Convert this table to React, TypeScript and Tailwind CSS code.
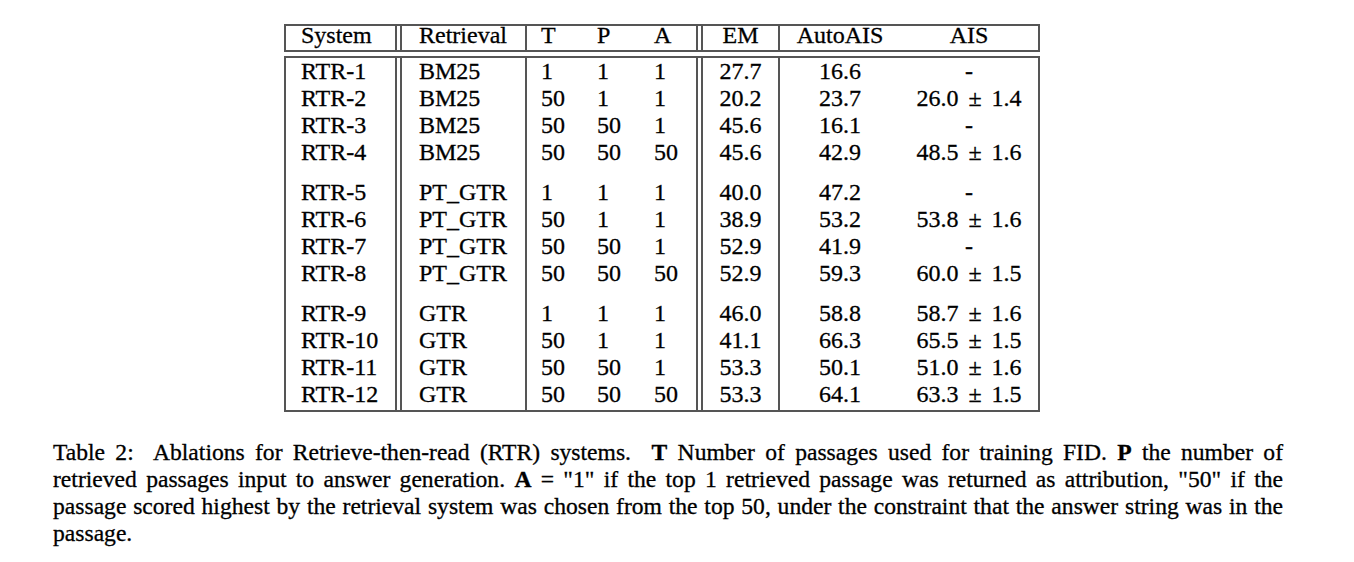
type Cell = string | JSX.Element;

const LINE = "border-[#555]";

function PlusMinus({ value, err }: { value: string; err: string }) {
  return (
    <span className="whitespace-nowrap">
      {value}
      <span className="mx-[10px]">±</span>
      {err}
    </span>
  );
}

function Row({ cells, className = "" }: { cells: Cell[]; className?: string }) {
  const [sys, ret, t, p, a, em, auto, ais] = cells;
  return (
    <div className={`flex ${className}`}>
      <div className={`w-[111px] border-r-2 ${LINE} pl-[15px]`}>{sys}</div>
      <div className={`w-[5px] border-r-2 ${LINE}`} />
      <div className={`w-[125px] border-r-2 ${LINE} pl-[17px]`}>{ret}</div>
      <div className={`flex w-[171px] border-r-2 ${LINE} pl-[14px]`}>
        <span className="w-[56px]">{t}</span>
        <span className="w-[57px]">{p}</span>
        <span>{a}</span>
      </div>
      <div className={`w-[5px] border-r-2 ${LINE}`} />
      <div className={`w-[77px] border-r-2 ${LINE} text-center`}>{em}</div>
      <div className="w-[120px] text-center">{auto}</div>
      <div className="flex-1 text-center">{ais}</div>
    </div>
  );
}

const EMPTY: Cell[] = ["", "", "", "", "", "", "", ""];

const groups: Cell[][][] = [
  [
    ["RTR-1", "BM25", "1", "1", "1", "27.7", "16.6", "-"],
    ["RTR-2", "BM25", "50", "1", "1", "20.2", "23.7", <PlusMinus value="26.0" err="1.4" />],
    ["RTR-3", "BM25", "50", "50", "1", "45.6", "16.1", "-"],
    ["RTR-4", "BM25", "50", "50", "50", "45.6", "42.9", <PlusMinus value="48.5" err="1.6" />],
  ],
  [
    ["RTR-5", "PT_GTR", "1", "1", "1", "40.0", "47.2", "-"],
    ["RTR-6", "PT_GTR", "50", "1", "1", "38.9", "53.2", <PlusMinus value="53.8" err="1.6" />],
    ["RTR-7", "PT_GTR", "50", "50", "1", "52.9", "41.9", "-"],
    ["RTR-8", "PT_GTR", "50", "50", "50", "52.9", "59.3", <PlusMinus value="60.0" err="1.5" />],
  ],
  [
    ["RTR-9", "GTR", "1", "1", "1", "46.0", "58.8", <PlusMinus value="58.7" err="1.6" />],
    ["RTR-10", "GTR", "50", "1", "1", "41.1", "66.3", <PlusMinus value="65.5" err="1.5" />],
    ["RTR-11", "GTR", "50", "50", "1", "53.3", "50.1", <PlusMinus value="51.0" err="1.6" />],
    ["RTR-12", "GTR", "50", "50", "50", "53.3", "64.1", <PlusMinus value="63.3" err="1.5" />],
  ],
];

const justifyLine = "text-justify [text-align-last:justify]";

export default function App() {
  return (
    <div className="h-[562px] w-[1354px] overflow-hidden bg-white pt-[24px] text-black [-webkit-text-stroke:0.3px_black] [font-family:'Liberation_Serif','Times_New_Roman',serif]">
      {/* table */}
      <div className="ml-[284px] w-[756px] text-[24px]">
        <div className={`h-[28px] border-2 ${LINE} leading-[18px]`}>
          <Row className="h-full" cells={["System", "Retrieval", "T", "P", "A", "EM", "AutoAIS", "AIS"]} />
        </div>
        <div className={`mt-[4px] border-2 ${LINE} leading-[27px]`}>
          {groups.map((rows, gi) => (
            <div key={gi}>
              {gi > 0 && <Row className="h-[13px]" cells={EMPTY} />}
              {rows.map((r) => (
                <Row key={r[0] as string} className="h-[27px]" cells={r} />
              ))}
            </div>
          ))}
          <Row className="h-[2px]" cells={EMPTY} />
        </div>
      </div>

      {/* caption */}
      <div className="ml-[53px] mt-[27px] w-[1230px] text-[23.6px] leading-[27px]">
        <div className={justifyLine}>
          Table 2:&nbsp; Ablations for Retrieve-then-read (RTR) systems.&nbsp; <b>T</b> Number of passages used for
          training FID. <b>P</b> the number of
        </div>
        <div className={justifyLine}>
          retrieved passages input to answer generation. <b>A</b> = "1" if the top 1 retrieved passage was returned as
          attribution, "50" if the
        </div>
        <div className={justifyLine}>
          passage scored highest by the retrieval system was chosen from the top 50, under the constraint that the answer
          string was in the
        </div>
        <div>passage.</div>
      </div>
    </div>
  );
}
